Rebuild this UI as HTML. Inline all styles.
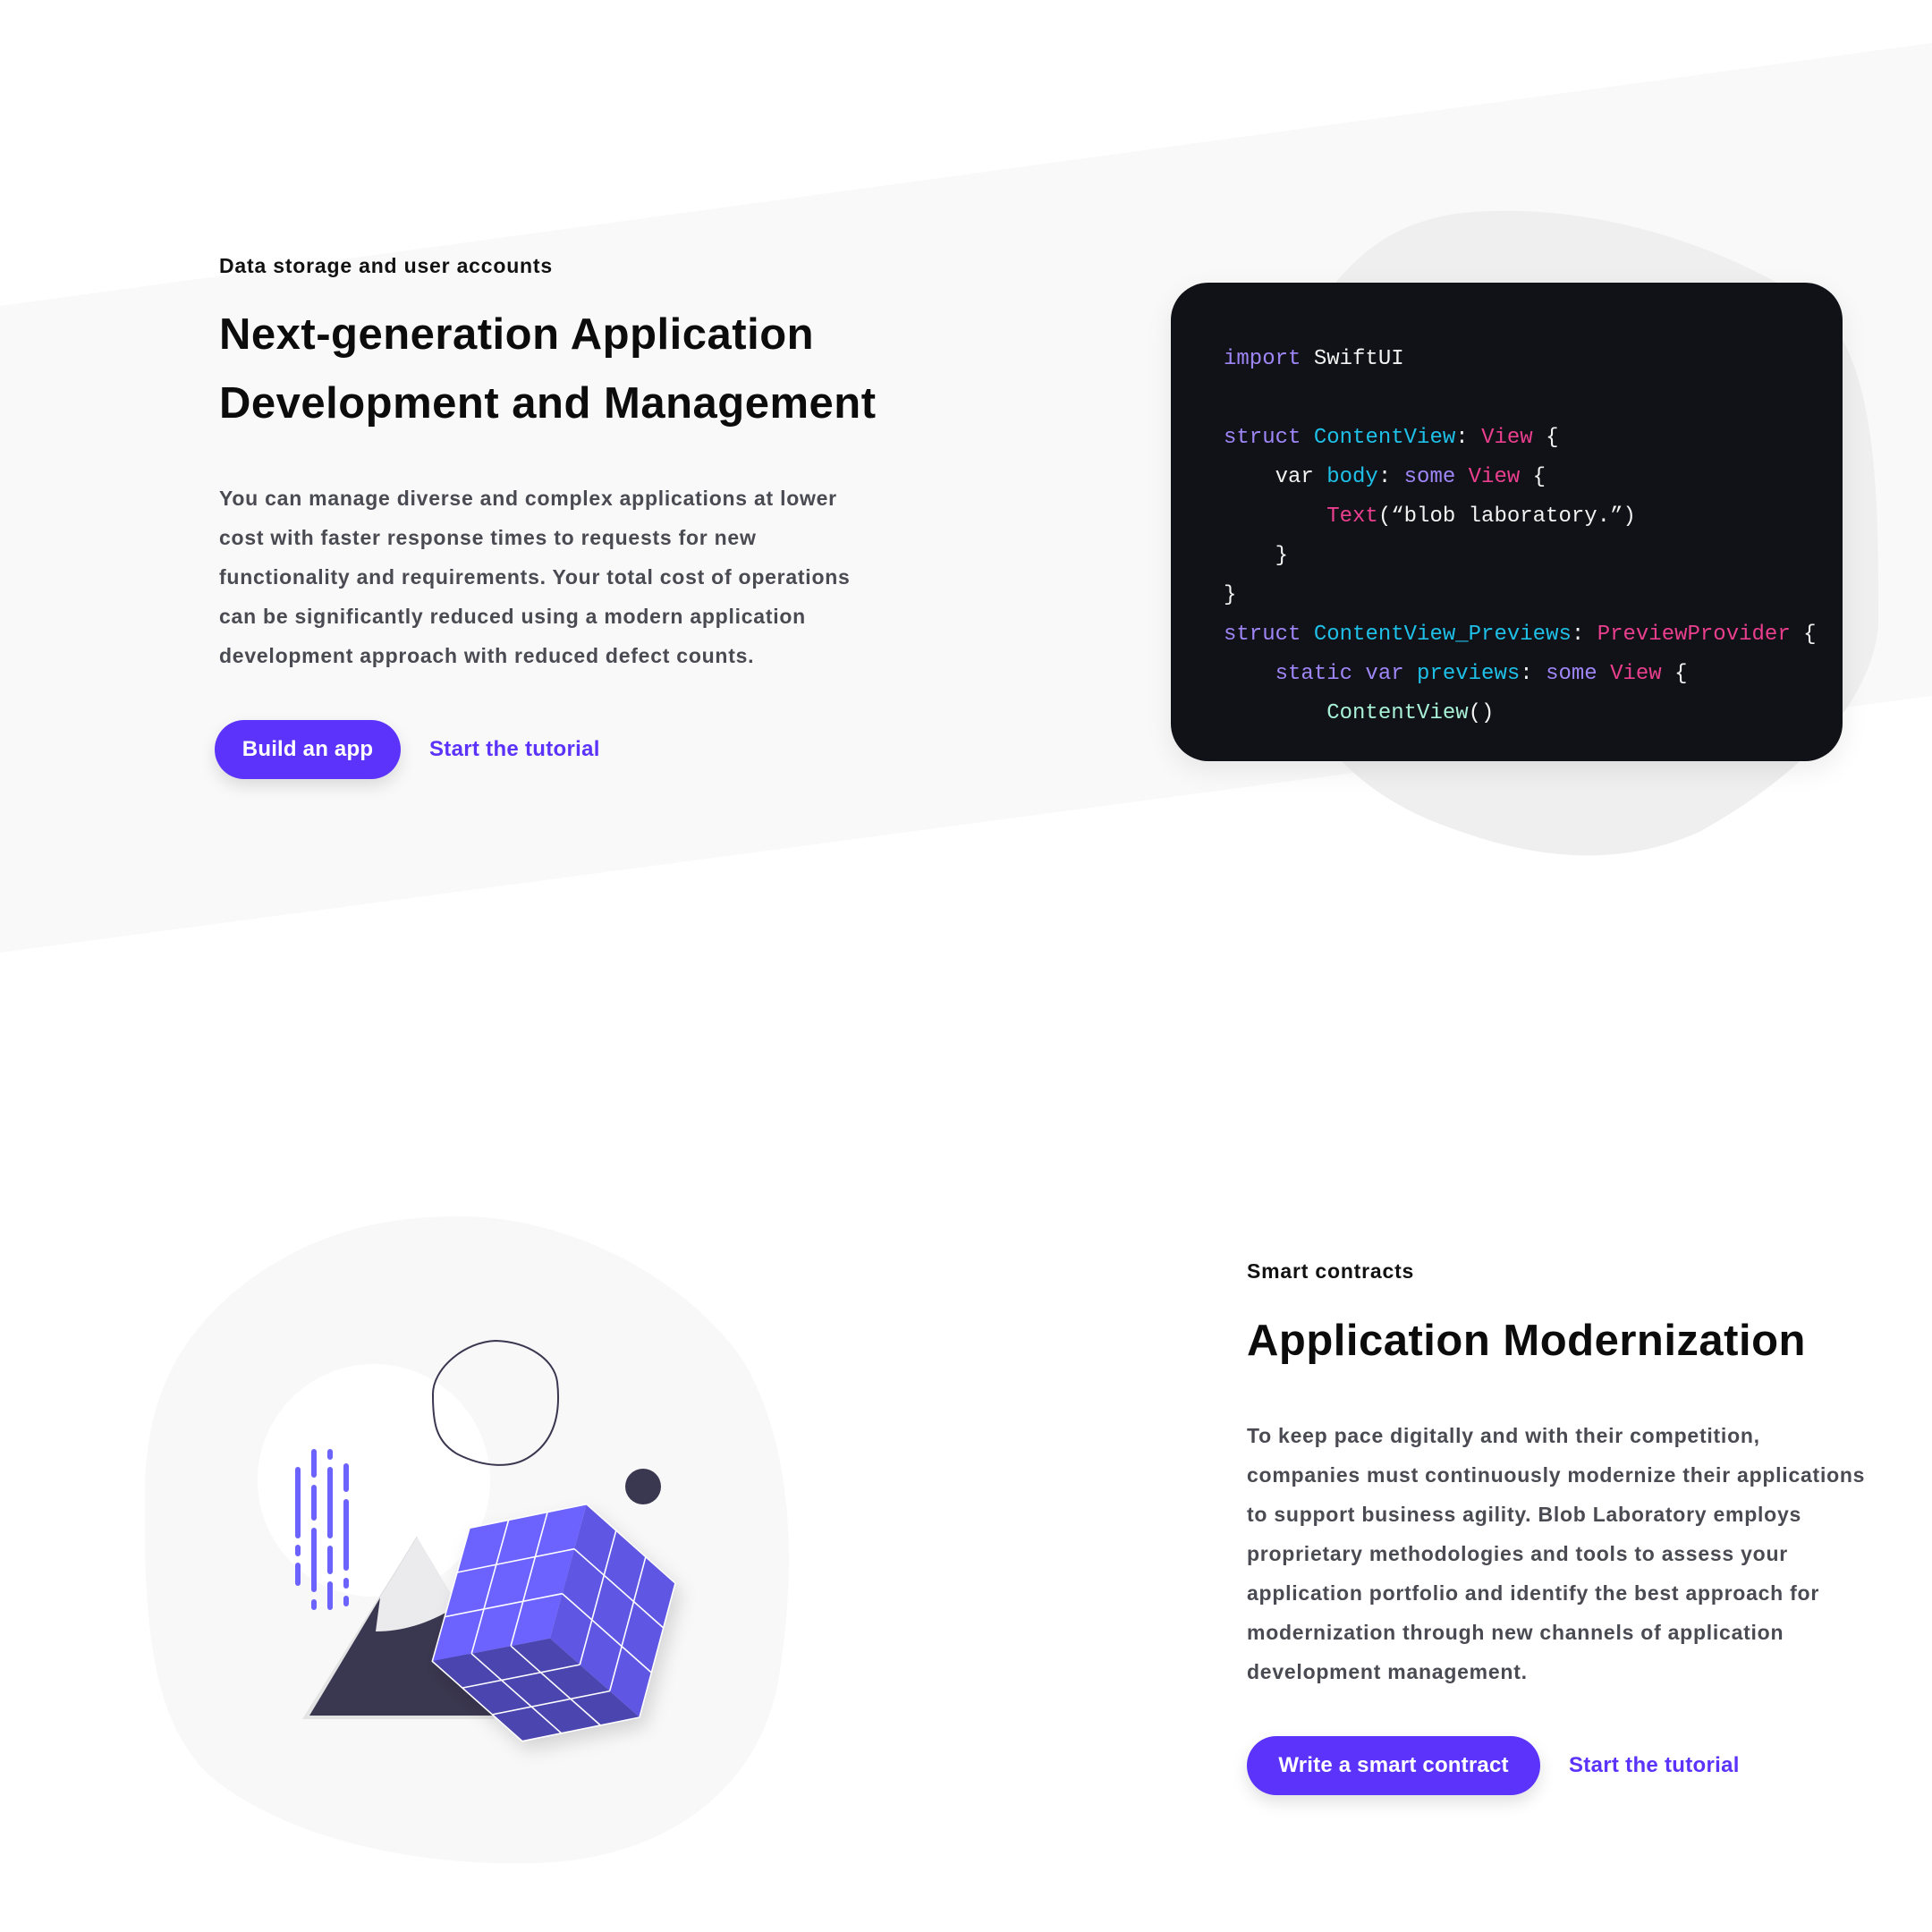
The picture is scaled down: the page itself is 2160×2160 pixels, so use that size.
<!DOCTYPE html>
<html><head><meta charset="utf-8">
<style>
*{margin:0;padding:0;box-sizing:border-box}
html,body{width:2160px;height:2160px;background:#fff;overflow:hidden}
body{position:relative;font-family:"Liberation Sans",sans-serif}
.abs{position:absolute;white-space:nowrap}
.eyebrow{font-size:23px;font-weight:700;color:#111;letter-spacing:0.8px}
.h{font-size:49px;font-weight:700;color:#0c0c0c;line-height:77px;letter-spacing:0.5px}
.p{font-size:23px;font-weight:700;color:#4a4a52;line-height:44px;letter-spacing:0.75px}
.btn{background:#5b33fa;color:#fff;font-size:24px;font-weight:700;border-radius:33px;height:66px;display:flex;align-items:center;justify-content:center;box-shadow:0 8px 18px rgba(0,0,0,0.12);letter-spacing:0.2px}
.link{font-size:24px;font-weight:700;color:#5b33fa;letter-spacing:0.3px}
.code{font-family:"Liberation Mono",monospace;font-size:24px;line-height:44px;color:#f2f2f2;white-space:pre}
.k{color:#9f86f7}.c{color:#1fc0e8}.m{color:#ea3f8e}.g{color:#a8f0d6}
</style></head><body>
<svg class="abs" style="left:0;top:0" width="2160" height="2160">
<polygon points="0,342 2160,48 2160,778 0,1065" fill="#f9f9f9"/>
<path d="M1620,240 C1760,220 1930,270 2040,350 C2100,420 2100,560 2100,700 C2090,800 1990,880 1900,930 C1800,975 1700,955 1620,925 C1520,890 1450,820 1420,700 C1400,560 1430,420 1490,320 C1530,270 1570,250 1620,240 Z" fill="#efefef"/>
<path d="M500,1360 C620,1355 760,1420 830,1520 C890,1620 890,1760 870,1880 C850,1990 760,2070 620,2082 C480,2090 330,2060 240,1990 C170,1930 160,1820 162,1660 C165,1560 200,1490 280,1430 C350,1380 420,1362 500,1360 Z" fill="#f8f8f8"/>
<circle cx="418" cy="1655" r="130" fill="#fff"/>
<polygon points="338,1922 466,1718 553,1922" fill="#e4e4e4"/>
<polygon points="346,1918 466,1718 553,1918" fill="#3a3750"/>
<path d="M466,1718 L512,1795 C480,1815 450,1824 420,1824 L425,1786 Z" fill="#ebebed"/>
<path d="M554,1499 C590,1500 620,1520 623,1545 C627,1580 620,1612 590,1630 C570,1642 540,1640 512,1626 C487,1612 484,1590 484,1560 C483,1530 520,1500 554,1499 Z" fill="none" stroke="#3a3750" stroke-width="2"/>
<circle cx="719" cy="1662" r="20" fill="#3a3750"/>
<g stroke="#6c63ff" stroke-width="6" stroke-linecap="round">
<line x1="333" y1="1643" x2="333" y2="1717"/><line x1="333" y1="1730" x2="333" y2="1737"/><line x1="333" y1="1750" x2="333" y2="1770"/>
<line x1="351" y1="1623" x2="351" y2="1649"/><line x1="351" y1="1663" x2="351" y2="1697"/><line x1="351" y1="1711" x2="351" y2="1777"/><line x1="351" y1="1791" x2="351" y2="1797"/>
<line x1="369" y1="1623" x2="369" y2="1629"/><line x1="369" y1="1643" x2="369" y2="1717"/><line x1="369" y1="1731" x2="369" y2="1757"/><line x1="369" y1="1771" x2="369" y2="1797"/>
<line x1="387" y1="1639" x2="387" y2="1665"/><line x1="387" y1="1679" x2="387" y2="1753"/><line x1="387" y1="1767" x2="387" y2="1773"/><line x1="387" y1="1787" x2="387" y2="1793"/>
</g>
<defs><filter id="sh" x="-20%" y="-20%" width="140%" height="140%"><feDropShadow dx="6" dy="10" stdDeviation="10" flood-opacity="0.15"/></filter></defs>
<g filter="url(#sh)">
<polygon points="525,1708.3 655.7,1681.7 615,1831.7 483.3,1857.3" fill="#6c63ff"/>
<polygon points="655.7,1681.7 755,1770 715,1920 615,1831.7" fill="#5f57e3"/>
<polygon points="483.3,1857.3 615,1831.7 715,1920 584,1946.7" fill="#4c44b0"/>
</g>
<g stroke="#fff" stroke-width="1.6" fill="none">
<polygon points="525,1708.3 655.7,1681.7 755,1770 715,1920 584,1946.7 483.3,1857.3"/>
<line x1="511.1" y1="1758" x2="642.1" y2="1731.7"/><line x1="497.2" y1="1807.6" x2="628.6" y2="1781.7"/>
<line x1="568.6" y1="1699.4" x2="527.2" y2="1848.8"/><line x1="612.1" y1="1690.6" x2="571.1" y2="1840.2"/>
<line x1="642.1" y1="1731.7" x2="741.7" y2="1820"/><line x1="628.6" y1="1781.7" x2="728.3" y2="1870"/>
<line x1="688.8" y1="1711.1" x2="648.3" y2="1861.1"/><line x1="721.9" y1="1740.6" x2="681.7" y2="1890.6"/>
<line x1="516.9" y1="1887.1" x2="648.3" y2="1861.1"/><line x1="550.4" y1="1916.9" x2="681.7" y2="1890.6"/>
<line x1="527.2" y1="1848.8" x2="627.7" y2="1937.8"/><line x1="571.1" y1="1840.2" x2="671.3" y2="1928.9"/>
</g>
</svg>

<div class="abs eyebrow" style="left:245px;top:284px">Data storage and user accounts</div>
<div class="abs h" style="left:245px;top:336px">Next-generation Application<br>Development and Management</div>
<div class="abs p" style="left:245px;top:535px">You can manage diverse and complex applications at lower<br>cost with faster response times to requests for new<br>functionality and requirements. Your total cost of operations<br>can be significantly reduced using a modern application<br>development approach with reduced defect counts.</div>
<div class="abs btn" style="left:240px;top:805px;width:208px">Build an app</div>
<div class="abs link" style="left:480px;top:824px">Start the tutorial</div>

<div class="abs" style="left:1309px;top:316px;width:751px;height:535px;background:#111217;border-radius:42px;box-shadow:0 10px 30px rgba(0,0,0,0.08)"></div>
<div class="abs code" style="left:1368px;top:380px"><span class="k">import</span> SwiftUI

<span class="k">struct</span> <span class="c">ContentView</span>: <span class="m">View</span> {
    var <span class="c">body</span>: <span class="k">some</span> <span class="m">View</span> {
        <span class="m">Text</span>(“blob laboratory.”)
    }
}
<span class="k">struct</span> <span class="c">ContentView_Previews</span>: <span class="m">PreviewProvider</span> {
    <span class="k">static var</span> <span class="c">previews</span>: <span class="k">some</span> <span class="m">View</span> {
        <span class="g">ContentView</span>()</div>

<div class="abs eyebrow" style="left:1394px;top:1408px">Smart contracts</div>
<div class="abs h" style="left:1394px;top:1461px">Application Modernization</div>
<div class="abs p" style="left:1394px;top:1583px">To keep pace digitally and with their competition,<br>companies must continuously modernize their applications<br>to support business agility. Blob Laboratory employs<br>proprietary methodologies and tools to assess your<br>application portfolio and identify the best approach for<br>modernization through new channels of application<br>development management.</div>
<div class="abs btn" style="left:1394px;top:1941px;width:328px">Write a smart contract</div>
<div class="abs link" style="left:1754px;top:1960px">Start the tutorial</div>
</body></html>
